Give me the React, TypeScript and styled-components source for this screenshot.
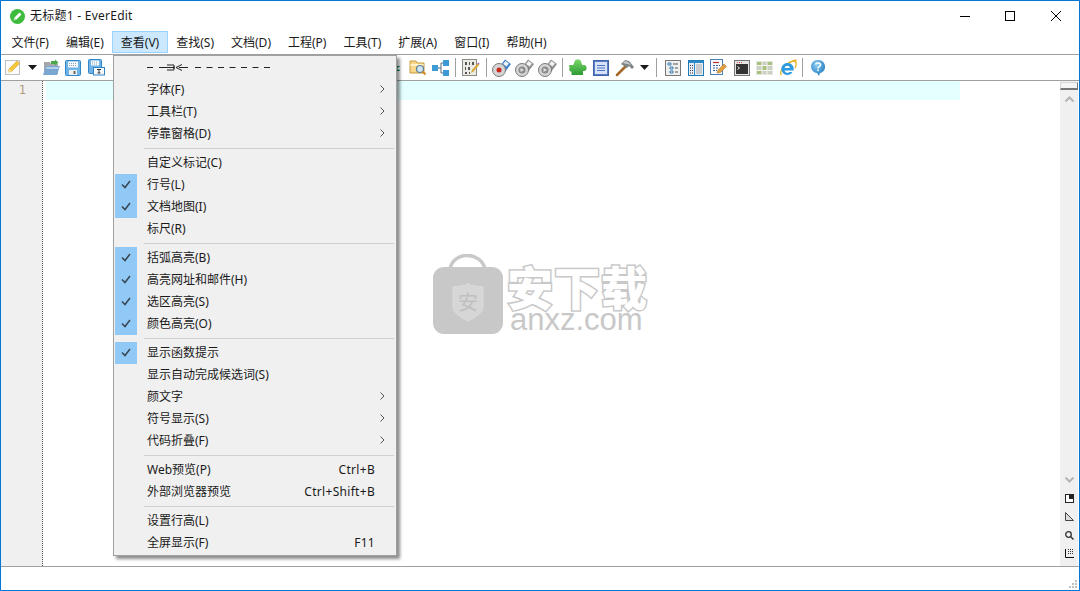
import React from 'react';
import styled, { createGlobalStyle } from 'styled-components';

const GlobalStyle = createGlobalStyle`
  html, body {
    margin: 0;
    padding: 0;
    background: #fff;
  }
  body {
    font-family: "Noto Sans", "Noto Sans CJK SC", sans-serif;
    font-size: 12px;
    color: #1a1a1a;
  }
`;

const Win = styled.div`
  position: relative;
  box-sizing: border-box;
  width: 1080px;
  height: 591px;
  border: 1px solid #0078d7;
  display: flex;
  flex-direction: column;
  overflow: hidden;
  background: #fff;
`;

const TitleBar = styled.div`
  height: 30px;
  flex-shrink: 0;
  display: flex;
  align-items: center;
  padding-left: 9px;
`;

const TitleText = styled.span`
  margin-left: 5px;
  flex: 1;
  line-height: 28px;
  letter-spacing: 0.25px;
`;

const WinBtn = styled.div<{ $w: number }>`
  width: ${p => p.$w}px;
  height: 30px;
  display: flex;
  align-items: center;
  justify-content: center;
  color: #000;
`;

const MenuBar = styled.div`
  height: 23px;
  flex-shrink: 0;
  display: flex;
  border-bottom: 1px solid #a0a0a0;
  padding-left: 2px;
`;

const MenuTop = styled.div<{ $active?: boolean }>`
  box-sizing: border-box;
  height: 22px;
  padding: 0 7.5px 1px;
  display: flex;
  align-items: center;
  border: 1px solid ${p => (p.$active ? '#99d1ff' : 'transparent')};
  background: ${p => (p.$active ? '#cce8ff' : 'transparent')};
`;

const ToolBar = styled.div`
  height: 25px;
  flex-shrink: 0;
  display: flex;
  align-items: center;
  border-bottom: 1px solid #a0a0a0;
  padding-left: 2px;
`;

const ToolBtn = styled.div<{ $w?: number }>`
  width: ${p => p.$w ?? 23}px;
  height: 25px;
  flex-shrink: 0;
  display: flex;
  align-items: center;
  justify-content: center;
`;

const ToolSep = styled.div<{ $w?: number }>`
  width: ${p => p.$w ?? 7}px;
  height: 19px;
  flex-shrink: 0;
  display: flex;
  justify-content: center;
  &::after {
    content: '';
    width: 1px;
    background: #a0a0a0;
  }
`;

const HiddenTools = styled.div`
  width: 298px;
  flex-shrink: 0;
  display: flex;
  justify-content: flex-end;
  color: #0b7a1e;
  font-size: 9px;
  font-weight: 700;
  padding-right: 6px;
  box-sizing: border-box;
`;

const Editor = styled.div`
  flex: 1;
  display: flex;
  min-height: 0;
`;

const Gutter = styled.div`
  box-sizing: border-box;
  width: 42px;
  background: #f0f0f0;
  border-right: 1px dotted #555;
  padding: 1px 16px 0 0;
  text-align: right;
  font-family: "DejaVu Sans Mono", monospace;
  font-size: 12px;
  line-height: 17px;
  color: #b09a80;
`;

const Code = styled.div`
  flex: 1;
  padding-left: 3px;
`;

const CurLine = styled.div`
  width: 914px;
  height: 19px;
  background: #e3ffff;
`;

const Scroll = styled.div`
  width: 18px;
  margin-right: 1px;
  padding-bottom: 3px;
  display: flex;
  flex-direction: column;
  align-items: center;
  background: #f0f0f0;
`;

const SplitHandle = styled.div`
  box-sizing: border-box;
  width: 100%;
  height: 8px;
  margin-top: 1px;
  background: #f4f4f4;
  border: 1px solid #d8d8d8;
  border-right-color: #777;
  border-bottom: 2px solid #777;
`;

const ScrollCell = styled.div`
  height: 18.5px;
  width: 100%;
  display: flex;
  align-items: center;
  justify-content: center;
  flex-shrink: 0;
`;

const ScrollFill = styled.div`
  flex: 1;
`;

const StatusBar = styled.div`
  height: 22px;
  flex-shrink: 0;
  border-top: 1px solid #a0a0a0;
  display: flex;
  justify-content: flex-end;
  align-items: flex-end;
  padding: 0 1px 1px 0;
`;

const DropMenu = styled.div`
  position: absolute;
  left: 112px;
  top: 54px;
  box-sizing: border-box;
  width: 284px;
  padding: 1px 0;
  background: #f0f0f0;
  border: 1px solid #a0a0a0;
  box-shadow: 3px 3px 3px rgba(0, 0, 0, 0.45);
  z-index: 2;
`;

const Row = styled.div`
  height: 22px;
  display: flex;
  align-items: center;
  padding-left: 1px;
`;

const CheckCell = styled.div<{ $on?: boolean }>`
  width: 22px;
  height: 22px;
  padding-bottom: 1px;
  box-sizing: border-box;
  flex-shrink: 0;
  display: flex;
  align-items: center;
  justify-content: center;
  background: ${p => (p.$on ? '#90c8f6' : 'transparent')};
`;

const Label = styled.span`
  flex: 1;
  margin-left: 10px;
  line-height: 16px;
  height: 16px;
  margin-bottom: 1px;
`;

const Shortcut = styled.span`
  letter-spacing: 0.3px;
  margin-right: 1px;
  line-height: 16px;
  height: 16px;
  margin-bottom: 1px;
`;

const Trail = styled.div`
  width: 20px;
  height: 22px;
  flex-shrink: 0;
  display: flex;
  align-items: center;
  justify-content: flex-end;
  padding: 0 11px 2px 0;
  box-sizing: border-box;
`;

const Divider = styled.div`
  height: 7px;
  display: flex;
  align-items: center;
  padding: 0 2px 0 30px;
  &::after {
    content: '';
    flex: 1;
    height: 1px;
    background: #d0d0d0;
  }
`;

const TearRow = styled.div`
  box-sizing: border-box;
  height: 22px;
  display: flex;
  align-items: center;
  padding: 0 0 2px 33px;
`;

const Watermark = styled.div`
  position: absolute;
  left: 431px;
  top: 253px;
  display: flex;
  gap: 4px;
  z-index: 1;
`;

const MarkWords = styled.div`
  display: flex;
  flex-direction: column;
  margin-top: 8px;
`;

const MarkCn = styled.div`
  font-family: "Noto Sans CJK SC", sans-serif;
  font-size: 46px;
  font-weight: 900;
  line-height: 46px;
  letter-spacing: 1px;
  color: #fff;
  -webkit-text-stroke: 3px #c8c8c8;
  paint-order: stroke fill;
`;

const MarkEn = styled.div`
  font-family: "Liberation Sans", sans-serif;
  font-size: 31px;
  line-height: 24px;
  margin-left: 3px;
  color: #c8c8c8;
`;

const AppIcon = () => (
  <svg width="15" height="15" viewBox="0 0 15 15">
    <circle cx="7.5" cy="7.5" r="7.5" fill="#3dbb3d" />
    <path d="M3.5 11.5l1-3 5-5 2 2-5 5z" fill="#fff" />
    <path d="M3.5 11.5l1-3 2 2z" fill="#a8e0a8" />
  </svg>
);

const Minimize = () => (
  <svg width="10" height="10"><path d="M0 5.500h10" stroke="#000" /></svg>
);
const Maximize = () => (
  <svg width="10" height="10"><rect x=".5" y=".5" width="9" height="9" fill="none" stroke="#000" /></svg>
);
const Close = () => (
  <svg width="10" height="10"><path d="M0 0l10 10M10 0L0 10" stroke="#000" /></svg>
);

const NoteIcon = () => (
  <svg width="17" height="17" viewBox="0 0 17 17">
    <rect x=".5" y="1.500" width="14" height="14" fill="#fbfbfb" stroke="#c0c0c0" />
    <path d="M3 13l1-3 8-8 2.500 2.500-8 8z" fill="#f4c83a" stroke="#d8a020" strokeWidth=".6" />
    <path d="M3 13l1-3 2.500 2.500z" fill="#f6e0b0" />
  </svg>
);

const DropArrow = () => (
  <svg width="9" height="5"><path d="M0 0h9L4.500 5z" fill="#1a1a1a" /></svg>
);

const FolderOpen = () => (
  <svg width="17" height="17" viewBox="0 0 17 17">
    <path d="M1 3h6l1 2h7v10H1z" fill="#a4a8ac" />
    <path d="M8 2h4V.5l3.500 3L12 6.500V5H8z" fill="#4aa84a" />
    <path d="M3 7h14l-3 9H0z" fill="#7aa6d2" />
    <path d="M3.500 8h12.500l-.5 2H3z" fill="#b4d0ea" />
  </svg>
);

const Floppy = () => (
  <svg width="16" height="16" viewBox="0 0 16 16">
    <rect x=".5" y=".5" width="15" height="15" rx="1" fill="#6eb2e6" stroke="#2f86c8" />
    <rect x="3" y="1.500" width="10" height="6" fill="#f6fafd" />
    <path d="M4 3.500h8M4 5.500h8" stroke="#8aa6bc" strokeDasharray="1 1" />
    <rect x="4" y="10" width="8" height="5" fill="#eef1f4" />
    <rect x="8.500" y="11" width="2" height="3" fill="#666" />
  </svg>
);

const FloppyAs = () => (
  <svg width="17" height="17" viewBox="0 0 17 17">
    <rect x=".5" y=".5" width="13" height="14" rx="1" fill="#6eb2e6" stroke="#2f86c8" />
    <rect x="3" y="1.500" width="8" height="5" fill="#f6fafd" />
    <path d="M4 3h6M4 5h6" stroke="#8aa6bc" strokeDasharray="1 1" />
    <rect x="5.500" y="8.500" width="11" height="7.500" fill="#f6f8fa" stroke="#2f86c8" />
    <path d="M9 10.500h4M11 10.500v3.500M9.500 14h3" stroke="#333" />
  </svg>
);

const FolderSearch = () => (
  <svg width="18" height="18" viewBox="0 0 18 18">
    <path d="M1 2h6l1.500 2H15v10H1z" fill="#f6d78c" stroke="#c79a3c" />
    <path d="M1.500 6h13" stroke="#fff1c8" strokeWidth="2" />
    <circle cx="11" cy="10" r="3.500" fill="#cfe6f5" stroke="#5e7f94" strokeWidth="1.200" />
    <path d="M13.500 12.500l3 3" stroke="#d08a20" strokeWidth="2" />
  </svg>
);

const Nodes = () => (
  <svg width="17" height="16" viewBox="0 0 17 16">
    <path d="M6 8h3M9 8V3h3M9 8v5h3" fill="none" stroke="#5a6a78" />
    <rect x="0" y="5" width="6" height="6" fill="#3e9ad6" />
    <rect x="11" y="0" width="6" height="6" fill="#3e9ad6" />
    <rect x="11" y="10" width="6" height="6" fill="#3e9ad6" />
  </svg>
);

const BinaryDoc = () => (
  <svg width="18" height="18" viewBox="0 0 18 18">
    <rect x=".5" y=".5" width="14" height="16" fill="#ecebe6" stroke="#8a8a84" />
    <path d="M3 3h2v3H3zM7 3h1v3H7zM3 8h1v3H3zM6 8h2v3H6zM3 13h2v2H3zM7 13h1v2H7zM10 3h2v3h-2z" fill="#55544e" />
    <path d="M9 14l1-3 6-7 1.500 1.500-6 7z" fill="#d8a838" />
    <path d="M15.500 4.500l1-1 1 1-1 1z" fill="#a050c8" />
  </svg>
);

const Macro = ({ active }: { active?: boolean }) => {
  const body = active ? '#3f7fd0' : '#8e8e8e';
  const inner = active ? '#c8261e' : '#8a8a8a';
  return (
    <svg width="19" height="18" viewBox="0 0 19 18">
      <path d="M8 7l5-6.500 6 4.500-6 8z" fill={body} />
      <path d="M11 5l2.500-3 3.500 2.500-2.500 3z" fill="#eef2f6" />
      <circle cx="7" cy="11" r="6.500" fill="#d4d4d4" stroke="#7a7a7a" />
      <circle cx="7" cy="11" r={active ? 2.5 : 3.5} fill={inner} />
      {!active && <path d="M5.500 9l3.500 2-3.500 2z" fill="#e4e4e4" />}
    </svg>
  );
};

const Puzzle = () => (
  <svg width="18" height="17" viewBox="0 0 18 17">
    <defs>
      <linearGradient id="pz" x1="0" y1="0" x2="0" y2="1">
        <stop offset="0" stopColor="#7cd86a" />
        <stop offset="1" stopColor="#2e9a34" />
      </linearGradient>
    </defs>
    <path d="M0 6h4c1-1 1-2 1.500-3.500C6.500-.5 11-.5 12 2.500c.3 1 .5 2 1.500 3.500H15c3-1 4 6 0 6h-1v4H2.500v-3.500C0 13 0 9 .5 9z" fill="url(#pz)" />
  </svg>
);

const BlueDoc = () => (
  <svg width="16" height="16" viewBox="0 0 16 16">
    <rect x=".5" y=".5" width="15" height="15" fill="#5c80c8" stroke="#3f63a8" />
    <rect x="2" y="2" width="12" height="12" fill="#d8e2f6" />
    <path d="M4 5.500h8M4 8h8M4 10.500h8" stroke="#4f76c0" />
  </svg>
);

const Hammer = () => (
  <svg width="19" height="18" viewBox="0 0 19 18">
    <path d="M11 7L2 16" stroke="#a5672a" strokeWidth="2.600" strokeLinecap="round" />
    <path d="M6 5l4-4 4 1 5 6-2 2-3-3-2 2z" fill="#7f8487" />
    <path d="M8 4l2-2 3 1 3 3z" fill="#c6cacc" />
  </svg>
);

const ListPanel = () => (
  <svg width="16" height="16" viewBox="0 0 16 16">
    <rect x=".5" y=".5" width="15" height="15" fill="#f0f0ee" stroke="#777" />
    <path d="M3 3h3v2H3zM5 7h3v2H5zM5 11h3v2H5z" fill="none" stroke="#3a7fb8" />
    <path d="M8 4h5M10 8h3M10 12h3" stroke="#555" />
  </svg>
);

const SidePanel = () => (
  <svg width="16" height="16" viewBox="0 0 16 16">
    <rect x=".5" y=".5" width="15" height="15" fill="#e8eef2" stroke="#1f7ab8" />
    <rect x="1" y="1" width="14" height="2" fill="#2f8ac8" />
    <rect x="6" y="3" width="1" height="12" fill="#2f8ac8" />
    <path d="M2 5.500h3M2 8h3M2 10.500h3M2 13h3" stroke="#334" strokeDasharray="1 1" />
    <rect x="8" y="4" width="6" height="10" fill="#c8ccd0" />
  </svg>
);

const EditDoc = () => (
  <svg width="17" height="17" viewBox="0 0 17 17">
    <rect x=".5" y=".5" width="12" height="15" fill="#fafafa" stroke="#4a7fb8" />
    <path d="M3 3.500h6" stroke="#b83030" strokeWidth="1.200" />
    <path d="M3 6.500h7M3 9h5M3 11.500h4" stroke="#3a5f98" strokeDasharray="2 1" />
    <path d="M7 14l1-3 6-6 2.500 2.500-6 6z" fill="#e0a040" stroke="#a86c20" strokeWidth=".5" />
  </svg>
);

const Terminal = () => (
  <svg width="16" height="16" viewBox="0 0 16 16">
    <rect x=".5" y=".5" width="15" height="15" fill="#e6e6e6" stroke="#777" />
    <rect x="2" y="4" width="12" height="10" fill="#333" />
    <path d="M3 2.500h1M5 2.500h1M7 2.500h1" stroke="#d05040" />
    <path d="M3.500 6.500l2 1.500-2 1.500" fill="none" stroke="#eee" />
  </svg>
);

const GreenGrid = () => (
  <svg width="17" height="14" viewBox="0 0 17 14">
    <rect width="17" height="14" fill="#e6e6de" />
    <path d="M1 1h5v3H1zM11 1h5v3h-5zM1 10h5v3H1zM6 5h5v4H6z" fill="#a8c080" />
    <path d="M6 1h5v3H6zM1 5h5v4H1zM11 5h5v4h-5zM6 10h5v3H6zM11 10h5v3h-5z" fill="#ccd0c4" />
    <path d="M0 4.500h17M0 9.500h17M6 0v14M11 0v14" stroke="#f4f4f0" />
  </svg>
);

const IeLogo = () => (
  <svg width="18" height="18" viewBox="0 0 18 18">
    <path d="M2.500 16c-3-3 4-13 15-15" fill="none" stroke="#e8b020" strokeWidth="1.300" />
    <path d="M14.500 2c3.500 0 3 4 1.500 7" fill="none" stroke="#e8b020" strokeWidth="1.300" />
    <path d="M8 4a6 6 0 1 0 5.500 9h-3a3 3 0 0 1-5-1.500h9A6 6 0 0 0 8 4zM5.500 9a2.800 2.800 0 0 1 5.500 0z" fill="#2e9be0" fillRule="evenodd" />
  </svg>
);

const HelpBubble = () => (
  <svg width="16" height="18" viewBox="0 0 16 18">
    <defs>
      <radialGradient id="hb" cx=".4" cy=".3" r=".8">
        <stop offset="0" stopColor="#8fd0f5" />
        <stop offset="1" stopColor="#1570b8" />
      </radialGradient>
    </defs>
    <path d="M8 1c9 0 9 12 2 13l-1 3-2-3C-1 13-1 1 8 1z" fill="url(#hb)" />
    <path d="M5.500 5.500c.5-2 5-2 5 .5 0 1.500-2.500 1.500-2.500 3.500" fill="none" stroke="#fff" strokeWidth="1.500" />
    <rect x="7.200" y="10.500" width="1.600" height="1.600" fill="#fff" />
  </svg>
);

const Check = () => (
  <svg width="10" height="9" viewBox="0 0 10 9">
    <path d="M1 4.500l3 3 5-6.500" fill="none" stroke="#3a4650" strokeWidth="1.500" />
  </svg>
);

const SubArrow = () => (
  <svg width="5" height="8" viewBox="0 0 5 8">
    <path d="M.5.500L4 4 .5 7.500" fill="none" stroke="#555" />
  </svg>
);

const TearOff = () => (
  <svg width="123" height="8" viewBox="0 0 123 8">
    <path d="M0 4.500h6M12 4.500h8" stroke="#222" />
    <path d="M20 2h7M20 4.500h7M20 7h7" stroke="#222" />
    <path d="M27 2.500v4" stroke="#222" strokeWidth="1.500" />
    <path d="M29 4.500l6-3M29 4.500l6 3M32 4.500h9" fill="none" stroke="#222" />
    <path d="M48 4.500h75" stroke="#222" strokeDasharray="6 5.500" />
  </svg>
);

const ScrollUp = () => (
  <svg width="9" height="6"><path d="M.5 5.500l4-4 4 4" fill="none" stroke="#b4b4b4" strokeWidth="2" /></svg>
);
const ScrollDown = () => (
  <svg width="9" height="6"><path d="M.5.500l4 4 4-4" fill="none" stroke="#b4b4b4" strokeWidth="2" /></svg>
);
const SplitIcon = () => (
  <svg width="9" height="9"><rect x=".5" y=".5" width="8" height="8" fill="#fff" stroke="#222" /><rect x="4" width="5" height="5" fill="#222" /></svg>
);
const TriIcon = () => (
  <svg width="9" height="9"><path d="M.5.500v8h8z" fill="#ddd" stroke="#444" /></svg>
);
const ZoomIcon = () => (
  <svg width="9" height="9"><circle cx="3.500" cy="3.500" r="2.800" fill="none" stroke="#333" strokeWidth="1.300" /><path d="M5.500 5.500l3 3" stroke="#333" strokeWidth="1.500" /></svg>
);
const GridIcon = () => (
  <svg width="9" height="9"><path d="M.5 0v8.500H9" fill="none" stroke="#111" /><path d="M3 .5h1M5 .5h1M7 .5h1M3 2.500h1M5 2.500h1M7 2.500h1M3 4.500h1M5 4.500h1M7 4.500h1" stroke="#333" /></svg>
);

const Grip = () => (
  <svg width="9" height="9">
    <path d="M6 0h2v2H6zM3 3h2v2H3zM6 3h2v2H6zM0 6h2v2H0zM3 6h2v2H3zM6 6h2v2H6z" fill="#c0c0c0" />
  </svg>
);

const WatermarkBag = () => (
  <svg width="71" height="82" viewBox="0 0 71 82">
    <path d="M18 15C21-3 49-3 53 15" fill="none" stroke="#c8c8c8" strokeWidth="3.500" />
    <rect x="1" y="13" width="70" height="67" rx="11" fill="#c8c8c8" />
    <path d="M21 33c10-1 20-3 15-3s5 2 15 3v20c0 6-9 11-15 14-6-3-15-8-15-14z" fill="#d6d6d6" stroke="#dcdcdc" />
    <text x="36" y="56" textAnchor="middle" fontFamily="'Noto Sans CJK SC', sans-serif" fontSize="20" fill="#c0c0c0">安</text>
  </svg>
);

const topMenus = ['文件(F)', '编辑(E)', '查看(V)', '查找(S)', '文档(D)', '工程(P)', '工具(T)', '扩展(A)', '窗口(I)', '帮助(H)'];

type Entry = { text: string; on?: boolean; sub?: boolean; key?: string } | 'sep';

const viewMenu: Entry[] = [
  { text: '字体(F)', sub: true },
  { text: '工具栏(T)', sub: true },
  { text: '停靠窗格(D)', sub: true },
  'sep',
  { text: '自定义标记(C)' },
  { text: '行号(L)', on: true },
  { text: '文档地图(I)', on: true },
  { text: '标尺(R)' },
  'sep',
  { text: '括弧高亮(B)', on: true },
  { text: '高亮网址和邮件(H)', on: true },
  { text: '选区高亮(S)', on: true },
  { text: '颜色高亮(O)', on: true },
  'sep',
  { text: '显示函数提示', on: true },
  { text: '显示自动完成候选词(S)' },
  { text: '颜文字', sub: true },
  { text: '符号显示(S)', sub: true },
  { text: '代码折叠(F)', sub: true },
  'sep',
  { text: 'Web预览(P)', key: 'Ctrl+B' },
  { text: '外部浏览器预览', key: 'Ctrl+Shift+B' },
  'sep',
  { text: '设置行高(L)' },
  { text: '全屏显示(F)', key: 'F11' },
];

const App = () => (
  <Win>
    <GlobalStyle />
    <TitleBar>
      <AppIcon />
      <TitleText>无标题1 - EverEdit</TitleText>
      <WinBtn $w={44}><Minimize /></WinBtn>
      <WinBtn $w={46}><Maximize /></WinBtn>
      <WinBtn $w={46}><Close /></WinBtn>
    </TitleBar>

    <MenuBar>
      {topMenus.map(m => (
        <MenuTop key={m} $active={m === '查看(V)'}>{m}</MenuTop>
      ))}
    </MenuBar>

    <ToolBar>
      <ToolBtn $w={20}><NoteIcon /></ToolBtn>
      <ToolBtn $w={18}><DropArrow /></ToolBtn>
      <ToolBtn $w={20}><FolderOpen /></ToolBtn>
      <ToolBtn $w={24}><Floppy /></ToolBtn>
      <ToolBtn><FloppyAs /></ToolBtn>
      <HiddenTools>c</HiddenTools>
      <ToolBtn><FolderSearch /></ToolBtn>
      <ToolBtn><Nodes /></ToolBtn>
      <ToolSep />
      <ToolBtn><BinaryDoc /></ToolBtn>
      <ToolSep $w={8} />
      <ToolBtn><Macro active /></ToolBtn>
      <ToolBtn><Macro /></ToolBtn>
      <ToolBtn><Macro /></ToolBtn>
      <ToolSep />
      <ToolBtn><Puzzle /></ToolBtn>
      <ToolBtn><BlueDoc /></ToolBtn>
      <ToolBtn $w={25}><Hammer /></ToolBtn>
      <ToolBtn $w={14}><DropArrow /></ToolBtn>
      <ToolSep $w={10} />
      <ToolBtn><ListPanel /></ToolBtn>
      <ToolBtn><SidePanel /></ToolBtn>
      <ToolBtn><EditDoc /></ToolBtn>
      <ToolBtn><Terminal /></ToolBtn>
      <ToolBtn><GreenGrid /></ToolBtn>
      <ToolBtn><IeLogo /></ToolBtn>
      <ToolSep />
      <ToolBtn><HelpBubble /></ToolBtn>
    </ToolBar>

    <Editor>
      <Gutter>1</Gutter>
      <Code><CurLine /></Code>
      <Scroll>
        <SplitHandle />
        <ScrollCell><ScrollUp /></ScrollCell>
        <ScrollFill />
        <ScrollCell><ScrollDown /></ScrollCell>
        <ScrollCell><SplitIcon /></ScrollCell>
        <ScrollCell><TriIcon /></ScrollCell>
        <ScrollCell><ZoomIcon /></ScrollCell>
        <ScrollCell><GridIcon /></ScrollCell>
      </Scroll>
    </Editor>

    <StatusBar><Grip /></StatusBar>

    <DropMenu>
      <TearRow><TearOff /></TearRow>
      {viewMenu.map((e, i) =>
        e === 'sep' ? (
          <Divider key={i} />
        ) : (
          <Row key={i}>
            <CheckCell $on={e.on}>{e.on && <Check />}</CheckCell>
            <Label>{e.text}</Label>
            {e.key && <Shortcut>{e.key}</Shortcut>}
            <Trail>{e.sub && <SubArrow />}</Trail>
          </Row>
        )
      )}
    </DropMenu>

    <Watermark>
      <WatermarkBag />
      <MarkWords>
        <MarkCn>安下载</MarkCn>
        <MarkEn>anxz.com</MarkEn>
      </MarkWords>
    </Watermark>
  </Win>
);

export default App;
